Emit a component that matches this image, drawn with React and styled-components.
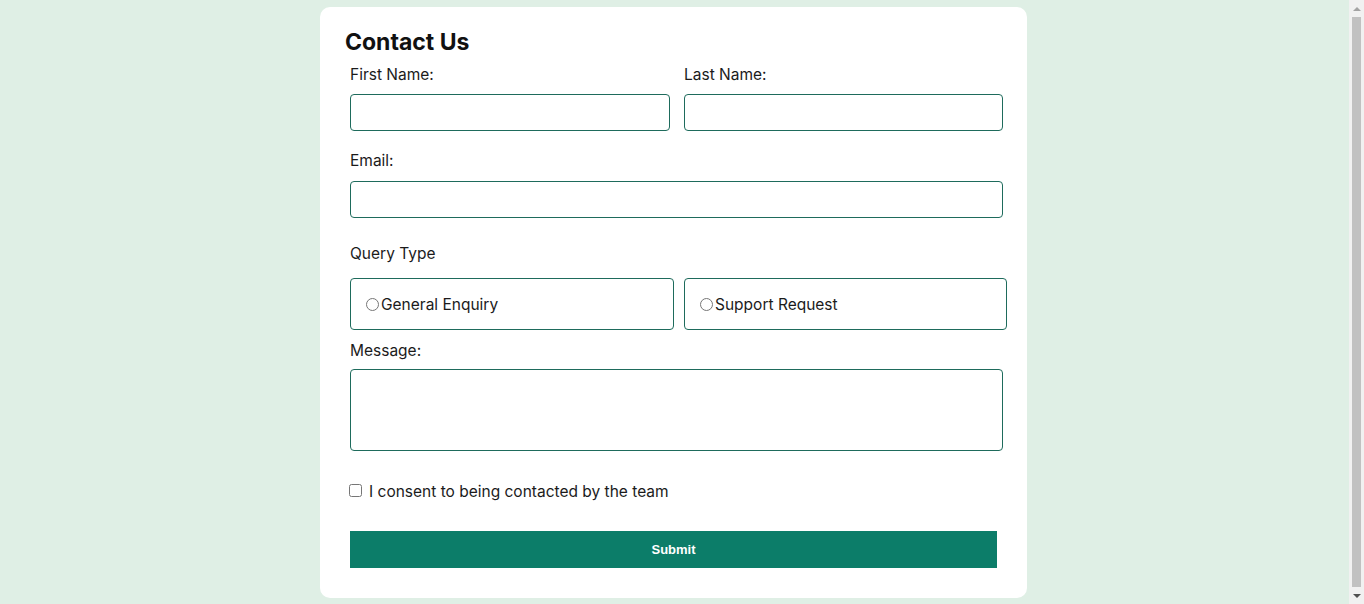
import styled, { createGlobalStyle } from 'styled-components';

const GlobalStyle = createGlobalStyle`
  * {
    box-sizing: border-box;
  }

  body {
    margin: 0;
    padding: 7px 17px 6px 0;
    background: #dfefe5;
    font-family: Inter, 'Noto Sans', sans-serif;
    color: #1b1b1b;
  }
`;

const Card = styled.main`
  width: 707px;
  margin: 0 auto;
  background: #ffffff;
  border-radius: 10px;
  padding: 22px 24px 30px 25px;
`;

const Title = styled.h1`
  margin: 0 0 10px;
  font-size: 23px;
  font-weight: 700;
  color: #111;
  line-height: 26px;
`;

const Form = styled.form`
  padding-left: 5px;
`;

const Row = styled.div`
  display: grid;
  grid-template-columns: ${(p) => p.$cols || '1fr'};
  gap: ${(p) => p.$gap || '14px'};
  margin-bottom: ${(p) => p.$mb || '0'};
`;

const Field = styled.div`
  display: flex;
  flex-direction: column;
`;

const Label = styled.label`
  font-size: 15.5px;
  line-height: 20px;
  margin: 0 0 ${(p) => p.$gap || '10px'};
  color: #1b1b1b;
`;

const Input = styled.input`
  height: 37px;
  border: 1px solid #1e6b5c;
  border-radius: 4px;
  font: inherit;
  padding: 0 10px;
  outline: none;
`;

const Message = styled.textarea`
  height: 82px;
  border: 1px solid #1e6b5c;
  border-radius: 4px;
  font: inherit;
  resize: none;
  outline: none;
`;

const RadioBox = styled.label`
  display: flex;
  align-items: center;
  height: 52px;
  border: 1px solid #1e6b5c;
  border-radius: 4px;
  padding: 0 15px;
  font-size: 15.5px;
  color: #1b1b1b;

  input {
    margin: 0 2px 0 0;
    width: 13px;
    height: 13px;
  }
`;

const Consent = styled.label`
  display: flex;
  align-items: center;
  gap: 7px;
  font-size: 15.5px;
  margin: 31px 0 30px -1px;

  input {
    margin: 0;
    width: 13px;
    height: 13px;
    position: relative;
    top: -1px;
  }
`;

const Submit = styled.button`
  display: block;
  width: 647px;
  height: 37px;
  border: none;
  background: #0c7d69;
  color: #ffffff;
  font-family: 'Liberation Sans', Arial, sans-serif;
  font-size: 13px;
  font-weight: 700;
`;

/* the browser's scrollbar from the screenshot, drawn over the page edge */
const ScrollBar = styled.div`
  position: fixed;
  top: 0;
  right: 0;
  width: 15px;
  height: 100vh;
  background: #f1f1f1;
  display: flex;
  flex-direction: column;
  align-items: center;
`;

const Arrow = styled.div`
  height: 17px;
  display: flex;
  align-items: center;
  justify-content: center;

  &::before {
    content: '';
    border-left: 4px solid transparent;
    border-right: 4px solid transparent;
    ${(p) =>
      p.$down
        ? 'border-top: 4px solid #505050;'
        : 'border-bottom: 4px solid #a3a3a3;'}
  }
`;

const Thumb = styled.div`
  flex: 1;
  width: 9px;
  background: #c1c1c1;
`;

export default function App() {
  return (
    <>
      <GlobalStyle />
      <Card>
        <Title>Contact Us</Title>
        <Form onSubmit={(e) => e.preventDefault()}>
          <Row $cols="320px 319px" $mb="20px">
            <Field>
              <Label htmlFor="first" $gap="9px">First Name:</Label>
              <Input id="first" type="text" />
            </Field>
            <Field>
              <Label htmlFor="last" $gap="9px">Last Name:</Label>
              <Input id="last" type="text" />
            </Field>
          </Row>
          <Row $cols="653px" $mb="26px">
            <Field>
              <Label htmlFor="email" $gap="10px">Email:</Label>
              <Input id="email" type="email" />
            </Field>
          </Row>
          <Label $gap="14px" as="div">Query Type</Label>
          <Row $cols="324px 323px" $gap="10px" $mb="11px">
            <RadioBox>
              <input type="radio" name="query" />
              General Enquiry
            </RadioBox>
            <RadioBox>
              <input type="radio" name="query" />
              Support Request
            </RadioBox>
          </Row>
          <Row $cols="653px">
            <Field>
              <Label htmlFor="msg" $gap="8px">Message:</Label>
              <Message id="msg" />
            </Field>
          </Row>
          <Consent>
            <input type="checkbox" />
            I consent to being contacted by the team
          </Consent>
          <Submit type="submit">Submit</Submit>
        </Form>
      </Card>
      <ScrollBar>
        <Arrow />
        <Thumb />
        <Arrow $down />
      </ScrollBar>
    </>
  );
}
